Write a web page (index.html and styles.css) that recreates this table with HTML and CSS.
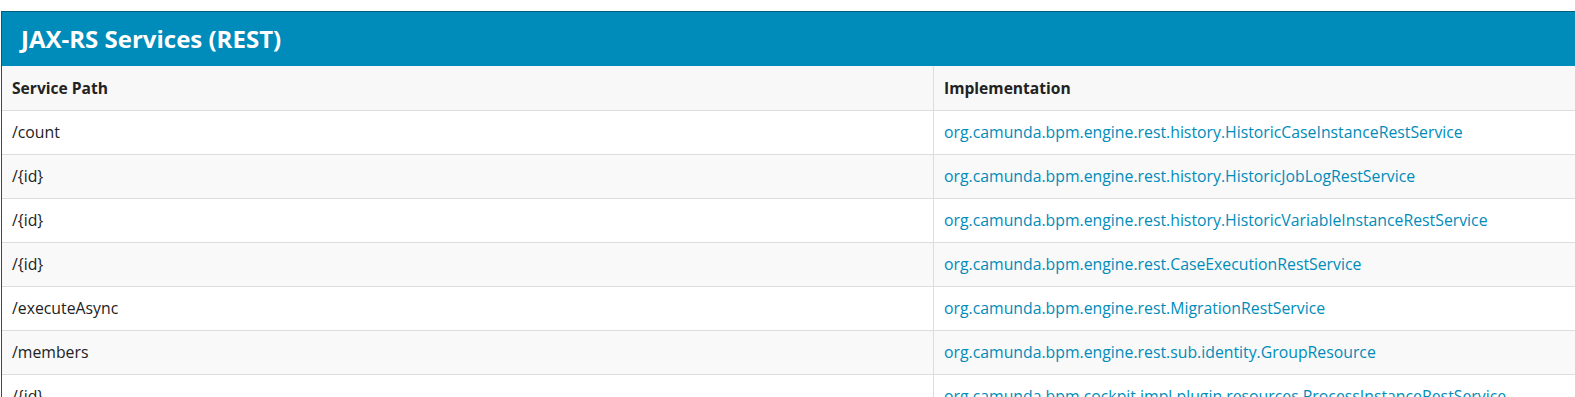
FILE: index.html
```html
<!DOCTYPE html>
<html>
<head>
<meta charset="utf-8">
<link rel="stylesheet" href="styles.css">
</head>
<body>
<div class="panel">
  <div class="panel-title">JAX-RS Services (REST)</div>
  <table class="services">
    <thead>
      <tr><th class="col-path">Service Path</th><th>Implementation</th></tr>
    </thead>
    <tbody>
      <tr><td>/count</td><td><a href="#">org.camunda.bpm.engine.rest.history.HistoricCaseInstanceRestService</a></td></tr>
      <tr><td>/{id}</td><td><a href="#">org.camunda.bpm.engine.rest.history.HistoricJobLogRestService</a></td></tr>
      <tr><td>/{id}</td><td><a href="#">org.camunda.bpm.engine.rest.history.HistoricVariableInstanceRestService</a></td></tr>
      <tr><td>/{id}</td><td><a href="#">org.camunda.bpm.engine.rest.CaseExecutionRestService</a></td></tr>
      <tr><td>/executeAsync</td><td><a href="#">org.camunda.bpm.engine.rest.MigrationRestService</a></td></tr>
      <tr><td>/members</td><td><a href="#">org.camunda.bpm.engine.rest.sub.identity.GroupResource</a></td></tr>
      <tr><td>/{id}</td><td><a href="#">org.camunda.bpm.cockpit.impl.plugin.resources.ProcessInstanceRestService</a></td></tr>
    </tbody>
  </table>
</div>
</body>
</html>
```
FILE: styles.css
```css
html, body {
  margin: 0;
  padding: 0;
  overflow: hidden;
  background: #ffffff;
}
body {
  padding: 11px 0 0 1px;
  font-family: "Open Sans", "Liberation Sans", sans-serif;
  color: #222222;
}
.panel {
  width: 1700px;
  border-top: 1px solid #005f80;
  border-left: 1px solid #005f80;
}
.panel-title {
  background: #008cba;
  color: #ffffff;
  font-weight: 700;
  font-size: 24px;
  height: 54px;
  line-height: 54px;
  padding-left: 19px;
}
.services {
  width: 100%;
  border-collapse: collapse;
  font-size: 15.8px;
}
.services th {
  text-align: left;
  font-weight: 700;
  font-size: 15.6px;
  background: #f8f8f8;
  padding: 11px 10px;
  line-height: 22px;
  height: 22px;
  border-bottom: 1px solid #dddddd;
}
.services td {
  padding: 10px 10px;
  line-height: 23px;
  border-bottom: 1px solid #dddddd;
}
.services th + th,
.services td + td {
  border-left: 1px solid #dddddd;
}
.col-path {
  width: 911px;
}
.services tbody tr:nth-child(even) td {
  background: #f9f9f9;
}
.services a {
  color: #008cba;
  text-decoration: none;
}
```
